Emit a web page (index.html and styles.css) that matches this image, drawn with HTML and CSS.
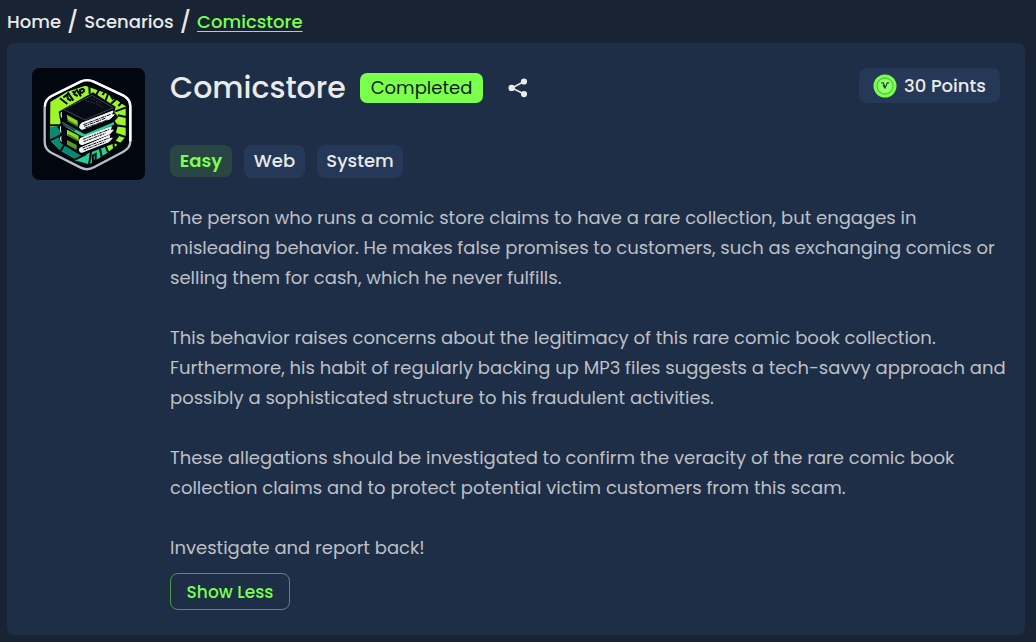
FILE: index.html
```html
<!DOCTYPE html>
<html lang="en">
<head>
<meta charset="utf-8">
<title>Comicstore</title>
<link rel="stylesheet" href="styles.css">
</head>
<body>
<nav class="crumbs"><a class="crumb-home">Home</a><span class="slash">/</span><a class="crumb-scenarios">Scenarios</a><span class="slash">/</span><a class="current">Comicstore</a></nav>
<main class="card">
  <svg class="logo" viewBox="18 18 339 336" aria-label="Comicstore logo">
    <rect x="18" y="18" width="339" height="336" rx="22" fill="#01060f"/>
    <path d="M73 120L122 90L178 71L247 96L299 133V224L285 240L247 270L190 306L156 295L105 267L72 235Z" fill="#9df52a"/>
    <path d="M72 196L110 190V218L162 266V299L105 267L72 235Z" fill="#078a75"/>
    <path d="M145 295L185 270L240 253L249 268L190 307Z" fill="#23cf95"/>
    <path d="M70 190H105M72 235L108 218M104 267L121 238M148 292L181 276M189 307L195 270M229 294L222 260M247 272L238 250M282 245L262 235M299 225L271 216M300 194L270 190M300 165L276 160M299 137L268 148M274 109L255 125M247 93L239 115M220 82L207 105M190 70L191 95M151 82L165 103M125 91L142 116M102 109L124 126" fill="none" stroke="#01060f" stroke-width="6"/>
    <path d="M112 106l11-8 3 13 10 5M139 91l8-2-2 8 10 5M162 84q10-6 12 0t-11 10zM200 281l9-5v18l-8 5zM262 243q12-4 14 7t-12 8zM229 99l8-10 13 5 10 16 17-7 9 20-9 9" fill="none" stroke="#01060f" stroke-width="6"/>
    <path d="M98 149L201 91L269 134L265 151L277 164L266 177L276 190L270 211L279 224L260 246L166 282L103 242L98 223L105 211L94 196L104 183Z" fill="#01060f"/>
    <path d="M112 142L198 100L262 137L177 174Z" fill="#070b15" stroke="#3b4453" stroke-width="3"/>
    <path d="M177 115l30 9m-13-16l17 9m-1 8l22 11m-22-19l16 7" stroke="#303846" stroke-width="3" stroke-dasharray="6 3"/>
    <g id="books">
      <path d="M106 150q-3 9 1 17M166 184L261 147L256 159L265 158L253 170L169 202Q157 201 163 188Z" fill="#f4f5f4" stroke="#f4f5f4" stroke-width="3"/>
      <path d="M172 188l82-31M174 193l66-25M178 198l67-24" stroke="#01060f" stroke-width="3" stroke-dasharray="11 2 4 2"/>
      <path d="M122 158L155 176V193L126 178Z" fill="#8edc22"/><path d="M127 173l28 16v6l-29-17z" fill="#448b18"/>
    </g>
    <path d="M108 179l61 34q6 5 15 1l80-34v8l-81 34q-11 4-21-2l-43-25z" fill="#23cf95"/><path d="M106 179l44 24-5 5-34-19z" fill="#343c4b"/>
    <path d="M104 193q-3 9 1 17M164 229L256 194L253 206L262 204L251 216L168 248Q157 247 161 234Z" fill="#f4f5f4" stroke="#f4f5f4" stroke-width="3"/>
    <path d="M171 232l80-30M173 239l65-25" stroke="#01060f" stroke-width="3" stroke-dasharray="9 2 4 2"/>
    <path d="M123 203L158 221V237L123 220Z" fill="#8edc22"/><path d="M126 215l29 16v7l-30-17z" fill="#448b18"/>
    <path d="M105 223q-3 8 1 16M163 258L251 220L249 231L259 228L249 239L168 271Q156 270 162 258Z" fill="#f4f5f4" stroke="#f4f5f4" stroke-width="3"/>
    <path d="M170 258l80-30M173 264l65-25" stroke="#01060f" stroke-width="3" stroke-dasharray="9 2 4 2"/>
    <path d="M123 234l29 15v14l-29-15z" fill="#549d20"/>
    <path d="M77 102L164 59Q183 50 203 59L291 100Q313 112 313 134V238Q313 258 292 269L204 316Q184 327 164 317L76 272Q56 261 56 239V136Q56 113 77 102Z" fill="none" stroke="#b5c0cb" stroke-width="7"/>
    <path d="M57 134Q56 113 77 102L164 59Q183 50 203 59L291 100Q313 112 313 134V238" fill="none" stroke="#fff" stroke-width="7"/>
  </svg>
  <section class="content">
    <header class="heading">
      <h1>Comicstore</h1><span class="completed"><span>Completed</span></span>
      <svg class="share" viewBox="0 0 20 20"><path d="M16 3.5L4 10l12 6" fill="none" stroke="#eaeaea" stroke-width="1.5"/><g fill="#eaeaea"><circle cx="16" cy="3.5" r="3.1"/><circle cx="3.6" cy="9.9" r="3.2"/><circle cx="16" cy="16.1" r="3.1"/></g></svg>
      <div class="points"><svg class="coin" viewBox="0 0 24 24"><circle cx="12" cy="12" r="11.5" fill="#7aff4c"/><circle cx="12" cy="12" r="8" fill="#91ff70" stroke="#4fc93a" stroke-width="1.3"/><path d="M8.3 8.8h2l1.9 4.9 2.1-4.9h1.8M10 11l2.2 3.5" fill="none" stroke="#18432d" stroke-width="1.2"/></svg><span>30 Points</span></div>
    </header>
    <div class="tags"><span class="tag easy">Easy</span><span class="tag web">Web</span><span class="tag system">System</span></div>
    <div class="description">
      <p><span class="l1">The person who runs a comic store claims to have a rare collection, but engages in</span><br><span class="l2">misleading behavior. He makes false promises to customers, such as exchanging comics or</span><br><span class="l3">selling them for cash, which he never fulfills.</span></p>
      <p><span class="l4">This behavior raises concerns about the legitimacy of this rare comic book collection.</span><br><span class="l5">Furthermore, his habit of regularly backing up MP3 files suggests a tech-savvy approach and</span><br><span class="l6">possibly a sophisticated structure to his fraudulent activities.</span></p>
      <p><span class="l7">These allegations should be investigated to confirm the veracity of the rare comic book</span><br><span class="l8">collection claims and to protect potential victim customers from this scam.</span></p>
      <p><span class="l9">Investigate and report back!</span></p>
    </div>
    <button class="less"><span>Show Less</span></button>
  </section>
</main>
</body>
</html>
```
FILE: styles.css
```css
* { box-sizing: border-box; }
body { margin: 0; width: 1036px; height: 642px; overflow: hidden; background: #182334; color: #eaeaea; font-family: Poppins, Inter, sans-serif; }
.crumbs { height: 43px; padding-left: 7px; display: flex; align-items: center; font-size: 18px; font-weight: 500; line-height: 27px; white-space: nowrap; }
.slash { margin: 0 6px; font-size: 22px; }
.current { color: #7aff4c; text-decoration: underline; text-decoration-thickness: 1px; text-underline-offset: 3px; }
.card { margin-left: 7px; width: 1018px; height: 592px; padding: 25px; border-radius: 8px; background: #1f2e47; display: flex; gap: 25px; }
.logo { width: 113px; height: 112px; flex: none; }
.content { width: 830px; flex: none; }
.heading { height: 77px; display: flex; align-items: flex-start; white-space: nowrap; }
h1 { margin: 0; width: 190px; font-size: 30px; line-height: 39px; font-weight: 500; }
.completed { margin-top: 5px; width: 123px; height: 30px; border-radius: 7px; background: #7aff4c; color: #101b20; font-size: 18px; line-height: 30px; text-align: center; }
.share { width: 20px; height: 20px; margin: 10px 0 0 25px; }
.points { margin-left: auto; width: 141px; height: 35px; border-radius: 8px; background: #263857; display: flex; align-items: center; padding-left: 14px; gap: 7px; font-size: 18px; font-weight: 500; }
.coin { width: 24px; height: 24px; flex: none; }
.tags { display: flex; gap: 12px; height: 33px; font-size: 18px; font-weight: 500; }
.tag { height: 33px; line-height: 32px; border-radius: 8px; background: #263857; text-align: center; }
.easy { width: 62px; height: 32px; background: #294644; color: #7aff4c; font-weight: 600; }
.web { width: 61px; }
.system { width: 86px; }
.description { margin-top: 25px; font-size: 18px; line-height: 30px; color: #bdc0c6; white-space: nowrap; }
.description p { margin: 0 0 30px; }
.description p:last-child { margin: 0; }
.less { display: block; margin-top: 10px; width: 120px; height: 37px; padding: 0; background: transparent; border: 1px solid #4b9949; border-radius: 8px; color: #7aff4c; font: 500 17px Poppins, Inter, sans-serif; }
```
